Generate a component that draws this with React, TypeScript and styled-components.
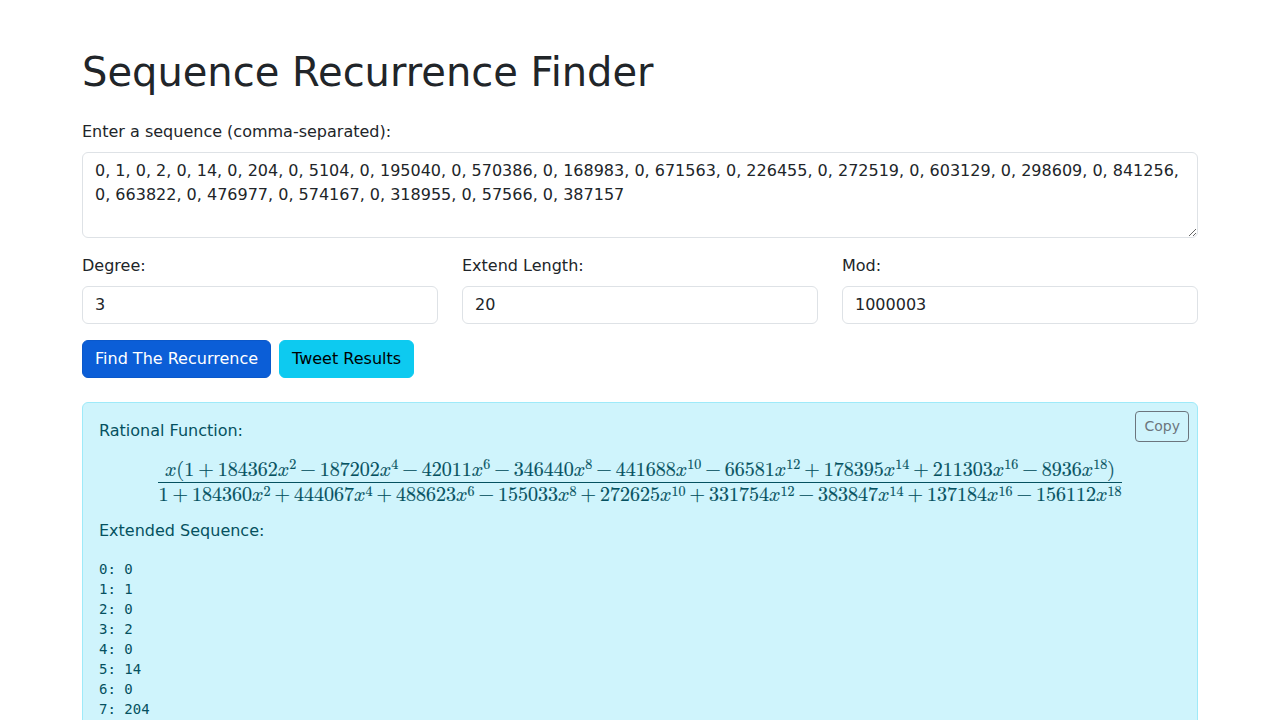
import React from 'react';
import styled, { createGlobalStyle } from 'styled-components';

const GlobalStyle = createGlobalStyle`
  *, *::before, *::after { box-sizing: border-box; }
  body {
    margin: 0;
    font-family: "DejaVu Sans", sans-serif;
    font-size: 16px;
    line-height: 24px;
    color: #212529;
    background: #fff;
  }
  html { scrollbar-width: none; }
`;

const Container = styled.main`
  max-width: 1140px;
  margin: 48px auto;
  padding: 0 12px;
`;

const Title = styled.h1`
  margin: 0 0 24px;
  font-size: 40px;
  line-height: 48px;
  font-weight: 400;
`;

const Field = styled.div`
  display: flex;
  flex-direction: column;
  gap: 8px;
  flex: 1;
  min-width: 0;
`;

const FieldRow = styled.div`
  display: flex;
  gap: 24px;
  margin: 16px 0;
`;

const TextArea = styled.textarea`
  display: block;
  width: 100%;
  height: 86px;
  padding: 6px 12px;
  font: inherit;
  color: inherit;
  background: #fff;
  border: 1px solid #dee2e6;
  border-radius: 6px;
  resize: vertical;
`;

const Input = styled.input`
  width: 100%;
  height: 38px;
  padding: 5px 12px 7px;
  font: inherit;
  color: inherit;
  background: #fff;
  border: 1px solid #dee2e6;
  border-radius: 6px;
`;

const Actions = styled.div`
  display: flex;
  gap: 8px;
`;

const Button = styled.button<{ $tone: 'primary' | 'info' }>`
  height: 38px;
  padding: 6px 12px;
  font: inherit;
  color: ${p => (p.$tone === 'primary' ? '#fff' : '#000')};
  background: ${p => (p.$tone === 'primary' ? '#0b5ed7' : '#0dcaf0')};
  border: 1px solid ${p => (p.$tone === 'primary' ? '#0a58ca' : '#0dcaf0')};
  border-radius: 6px;
  cursor: pointer;
`;

const Results = styled.section`
  position: relative;
  margin-top: 24px;
  padding: 16px;
  color: #055160;
  background: #cff4fc;
  border: 1px solid #9eeaf9;
  border-radius: 6px;
`;

const CopyButton = styled.button`
  position: absolute;
  top: 8px;
  right: 8px;
  padding: 4px 8px;
  font-family: inherit;
  font-size: 14px;
  line-height: 21px;
  color: #6c757d;
  background: transparent;
  border: 1px solid #6c757d;
  border-radius: 4px;
  cursor: pointer;
`;

const Caption = styled.p`
  margin: 0;
`;

const Formula = styled.div`
  display: flex;
  justify-content: center;
  margin: 15px 0 12px;
`;

const Fraction = styled.div`
  display: flex;
  flex-direction: column;
  font-family: "Latin Modern Math", "Liberation Serif", serif;
  font-size: 20px;
  line-height: 24px;
  white-space: nowrap;
  text-align: center;
  -webkit-text-stroke: 0.01em currentColor;
`;

const Power = styled.sup`
  font-size: 14px;
  line-height: 0;
`;

const Numerator = styled.div`
  border-bottom: 1px solid #055160;

  ${Power} { vertical-align: 7px; }
`;

const Denominator = styled.div`
  ${Power} { vertical-align: 5px; }
`;

const Operator = styled.span`
  margin: 0 4px;
`;

const Sequence = styled.pre`
  margin: 16px 0;
  font-family: "DejaVu Sans Mono", monospace;
  font-size: 14px;
  line-height: 20px;
`;

type Term = [sign: string, coefficient: number, power: number];

const numerator: Term[] = [
  ['+', 184362, 2], ['−', 187202, 4], ['−', 42011, 6], ['−', 346440, 8], ['−', 441688, 10],
  ['−', 66581, 12], ['+', 178395, 14], ['+', 211303, 16], ['−', 8936, 18],
];
const denominator: Term[] = [
  ['+', 184360, 2], ['+', 444067, 4], ['+', 488623, 6], ['−', 155033, 8], ['+', 272625, 10],
  ['+', 331754, 12], ['−', 383847, 14], ['+', 137184, 16], ['−', 156112, 18],
];
const extended = [0, 1, 0, 2, 0, 14, 0, 204];
const initial =
  '0, 1, 0, 2, 0, 14, 0, 204, 0, 5104, 0, 195040, 0, 570386, 0, 168983, 0, 671563, 0, 226455, 0, 272519, 0, 603129, 0, 298609, 0, 841256, 0, 663822, 0, 476977, 0, 574167, 0, 318955, 0, 57566, 0, 387157';

function Polynomial({ terms }: { terms: Term[] }) {
  return (
    <>
      1
      {terms.map(([sign, coefficient, power]) => (
        <React.Fragment key={power}>
          <Operator>{sign}</Operator>
          {coefficient}𝑥
          <Power>{power}</Power>
        </React.Fragment>
      ))}
    </>
  );
}

export default function App() {
  return (
    <>
      <GlobalStyle />
      <Container>
        <Title>Sequence Recurrence Finder</Title>
        <Field>
          <label htmlFor="sequence">Enter a sequence (comma-separated):</label>
          <TextArea id="sequence" defaultValue={initial} />
        </Field>
        <FieldRow>
          <Field>
            <label htmlFor="degree">Degree:</label>
            <Input id="degree" defaultValue="3" />
          </Field>
          <Field>
            <label htmlFor="extend">Extend Length:</label>
            <Input id="extend" defaultValue="20" />
          </Field>
          <Field>
            <label htmlFor="mod">Mod:</label>
            <Input id="mod" defaultValue="1000003" />
          </Field>
        </FieldRow>
        <Actions>
          <Button $tone="primary">Find The Recurrence</Button>
          <Button $tone="info">Tweet Results</Button>
        </Actions>
        <Results>
          <CopyButton>Copy</CopyButton>
          <Caption>Rational Function:</Caption>
          <Formula>
            <Fraction>
              <Numerator>𝑥(<Polynomial terms={numerator} />)</Numerator>
              <Denominator><Polynomial terms={denominator} /></Denominator>
            </Fraction>
          </Formula>
          <Caption>Extended Sequence:</Caption>
          <Sequence>{extended.map((value, index) => `${index}: ${value}`).join('\n')}</Sequence>
        </Results>
      </Container>
    </>
  );
}
